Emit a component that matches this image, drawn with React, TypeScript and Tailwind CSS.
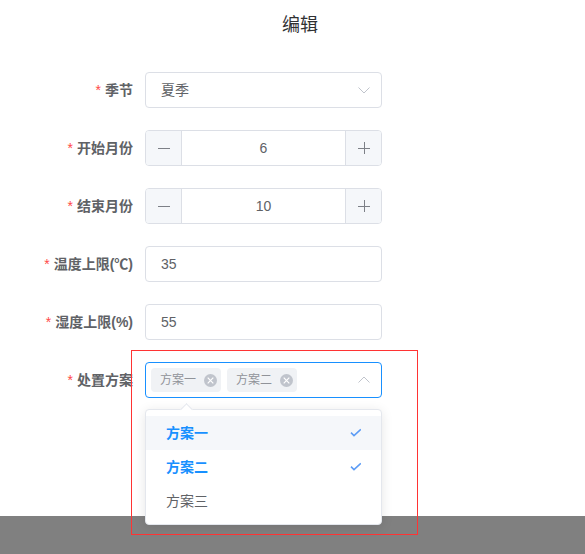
import React from 'react';

const font = { fontFamily: '"Liberation Sans", "Noto Sans CJK SC", sans-serif' };

const Chevron = ({ up }: { up?: boolean }) => (
  <svg width="14" height="14" viewBox="0 0 14 14" fill="none" stroke="#c0c4cc" strokeWidth="1" className={up ? 'rotate-180' : ''}>
    <path d="M1.5 4.5 7 10l5.5-5.5" />
  </svg>
);

const Check = () => (
  <svg width="12" height="12" viewBox="0 0 12 12" fill="none" stroke="#5b9bf5" strokeWidth="1.5">
    <path d="M2 5.6 5 8.6 11.8 2.4" />
  </svg>
);

const Row = ({ label, children }: { label: string; children: React.ReactNode }) => (
  <div className="flex h-9 mb-[22px]">
    <label className="w-[145px] shrink-0 pr-3 text-right text-sm font-bold leading-9 text-[#606266] whitespace-nowrap">
      <span className="text-[#ff4949] mr-1 font-normal">*</span>
      {label}
    </label>
    <div className="w-[237px] shrink-0">{children}</div>
  </div>
);

const Stepper = ({ value }: { value: number }) => (
  <div className="flex h-9 rounded border border-[#dcdfe6] text-sm text-[#606266] overflow-hidden">
    <div className="w-[36px] bg-[#f5f7fa] border-r border-[#dcdfe6] flex items-center justify-center">
      <svg width="12" height="12" viewBox="0 0 12 12" stroke="#7d8087" strokeWidth="1"><path d="M0 6.5h12" /></svg>
    </div>
    <div className="flex-1 flex items-center justify-center">{value}</div>
    <div className="w-[36px] bg-[#f5f7fa] border-l border-[#dcdfe6] flex items-center justify-center">
      <svg width="12" height="12" viewBox="0 0 12 12" stroke="#7d8087" strokeWidth="1"><path d="M0 6.5h12M6.5 0v12" /></svg>
    </div>
  </div>
);

const TextBox = ({ value }: { value: string }) => (
  <div className="h-9 rounded border border-[#dcdfe6] px-[15px] text-sm leading-[34px] text-[#606266]">{value}</div>
);

const Tag = ({ text }: { text: string }) => (
  <div className="h-6 w-[70px] rounded bg-[#f0f2f5] pl-[9px] flex items-center text-xs text-[#909399]">
    <span>{text}</span>
    <span className="ml-2 w-[13px] h-[13px] rounded-full bg-[#c0c4cc] flex items-center justify-center">
      <svg width="7" height="7" viewBox="0 0 7 7" stroke="#fff" strokeWidth="1.2"><path d="M.7.7l5.6 5.6M6.3.7.7 6.3" /></svg>
    </span>
  </div>
);

const Option = ({ text, selected, hover }: { text: string; selected?: boolean; hover?: boolean }) => (
  <div className={`h-[34px] pl-5 pr-[20px] flex items-center justify-between text-sm ${hover ? 'bg-[#f5f7fa]' : ''} ${selected ? 'text-[#1890ff] font-bold' : 'text-[#606266]'}`}>
    <span>{text}</span>
    {selected && <Check />}
  </div>
);

export default function App() {
  return (
    <div className="relative w-[585px] h-[554px] overflow-hidden bg-white flex flex-col" style={font}>
      <div className="h-[516px] shrink-0">
        <div className="w-[600px] pt-[13px] h-[72px] text-center text-lg leading-6 text-[#303133]">编辑</div>
        <Row label="季节">
          <div className="h-9 rounded border border-[#dcdfe6] pl-[15px] pr-[10px] flex items-center justify-between text-sm text-[#606266]">
            <span>夏季</span>
            <Chevron />
          </div>
        </Row>
        <Row label="开始月份"><Stepper value={6} /></Row>
        <Row label="结束月份"><Stepper value={10} /></Row>
        <Row label="温度上限(℃)"><TextBox value="35" /></Row>
        <Row label="湿度上限(%)"><TextBox value="55" /></Row>
        <Row label="处置方案">
          <div className="h-9 rounded border border-[#1890ff] pl-[5px] pr-[10px] flex items-center gap-[6px]">
            <Tag text="方案一" />
            <Tag text="方案二" />
            <span className="ml-auto"><Chevron up /></span>
          </div>
        </Row>
      </div>
      <div className="flex-1 bg-[#808080]" />

      {/* open dropdown */}
      <div className="absolute left-[145px] top-[409px] w-[237px] rounded border border-[#e4e7ed] bg-white py-[6px] shadow-[0_2px_12px_0_rgba(0,0,0,0.1)]">
        <span className="absolute left-[36px] -top-[5px] w-[9px] h-[9px] rotate-45 bg-white border-l border-t border-[#e4e7ed]" />
        <Option text="方案一" selected hover />
        <Option text="方案二" selected />
        <Option text="方案三" />
      </div>

      {/* red annotation box */}
      <div className="absolute left-[131px] top-[350px] w-[287px] h-[185px] border border-[#ff3333] pointer-events-none" />
    </div>
  );
}
